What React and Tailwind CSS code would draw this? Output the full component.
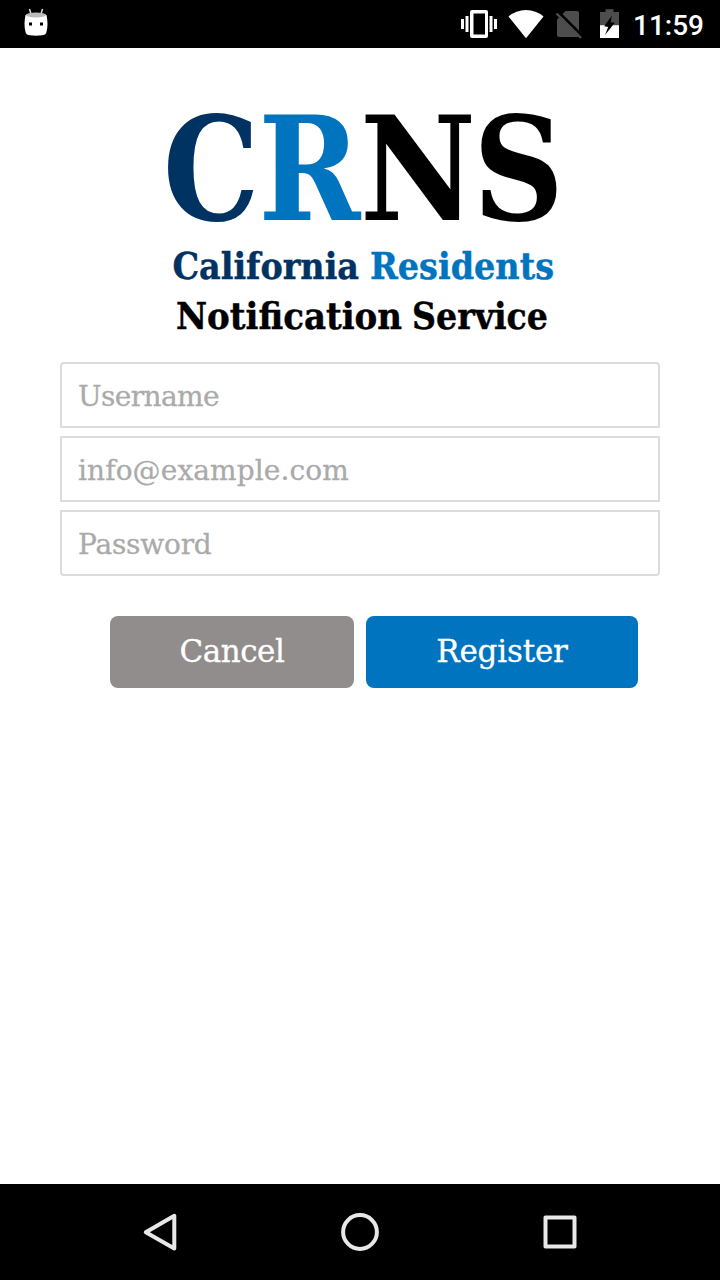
import React from "react";

const serif = "font-['DejaVu_Serif',serif] [-webkit-text-stroke-width:0.3px]";

function StatusBar() {
  return (
    <header className="flex h-12 shrink-0 items-center justify-between bg-black pl-6 pr-4">
      <svg className="h-12 w-6" viewBox="24 0 24 48">
        <path d="M29.500 9l1.500 5M42.500 9l-1.500 5" stroke="#ddd" strokeWidth="1.500" />
        <path d="M25.500 15Q36 11 46.500 15Q48.500 24 46.500 32Q46 35 42 35.300Q36 36 30 35.300Q26 35 25.500 32Q23.500 24 25.500 15Z" fill="#fff" />
        <ellipse cx="36" cy="15" rx="10" ry="2.500" fill="#bbb" />
        <path d="M29 22.500h3v3h-3zM40 22.500h3v3h-3z" fill="#000" />
      </svg>
      <div className="flex items-center">
        <svg className="h-12 w-[170px]" viewBox="460 0 170 48">
          <g fill="#fff">
            <path fillRule="evenodd" d="M472 10h14q2 0 2 2v24q0 2-2 2h-14q-2 0-2-2V12q0-2 2-2zM473.500 13.500v21h11.500v-21z" />
            <path d="M461 19h3v10h-3zM465.500 16h3v16h-3zM489.500 16h3v16h-3zM494 19h3v10h-3z" />
            <path d="M508.500 16.500Q516 10 526 10Q536 10 543.500 16.500L526 38.300Z" />
          </g>
          <path d="M565.500 11H577q2 0 2 2v22q0 2-2 2h-18q-2 0-2-2V19.500Z" fill="#4d4d4d" />
          <path d="M558.200 11.800L583.200 36.800" stroke="#000" strokeWidth="2.700" />
          <path d="M556.500 13.500L581 38" stroke="#4d4d4d" strokeWidth="2.400" />
          <path d="M600 12h5.500V9.300h8V12h5.500v13.500h-19z" fill="#4d4d4d" />
          <path d="M600 25.200h19V38h-19z" fill="#fff" />
          <path d="M611.800 15.800L604.200 26.300L608.200 27L605 35L614.800 22.800L610.600 22.200Z" fill="#000" />
        </svg>
        <svg className="h-12 w-[74px] overflow-visible" viewBox="630 0 74 48">
          <text x="633" y="35" textLength="71" lengthAdjust="spacingAndGlyphs" fill="#fff" className="font-[Roboto,sans-serif] text-[28px] font-medium">11:59</text>
        </svg>
      </div>
    </header>
  );
}

function Logo() {
  return (
    <svg
      role="img"
      className="h-[260px] w-[420px] overflow-visible font-['DejaVu_Serif_Condensed','DejaVu_Serif',serif] font-bold [font-stretch:condensed]"
      viewBox="150 80 420 260"
    >
      <g className="text-[145px]">
        <text x="163" y="220" textLength="96.500" lengthAdjust="spacingAndGlyphs" fill="#003262">C</text>
        <text x="258.500" y="220" textLength="102" lengthAdjust="spacingAndGlyphs" fill="#0074bf">R</text>
        <text x="360" y="220" textLength="116" lengthAdjust="spacingAndGlyphs" fill="#000">N</text>
        <text x="473" y="220" textLength="91" lengthAdjust="spacingAndGlyphs" fill="#000">S</text>
      </g>
      <g className="text-[37px]" strokeWidth=".4">
        <text x="172.500" y="279.300" textLength="186.500" lengthAdjust="spacingAndGlyphs" fill="#003262" stroke="#003262">California</text>
        <text x="370" y="279.300" textLength="184" lengthAdjust="spacingAndGlyphs" fill="#0074bf" stroke="#0074bf">Residents</text>
        <text x="176" y="329.300" textLength="226" lengthAdjust="spacingAndGlyphs" fill="#000" stroke="#000">Notification</text>
        <text x="412" y="329.300" textLength="136" lengthAdjust="spacingAndGlyphs" fill="#000" stroke="#000">Service</text>
      </g>
    </svg>
  );
}

function Field({ className, ...props }) {
  return (
    <input
      {...props}
      className={`block h-[66px] w-full border-2 border-[#dcdcdc] bg-white px-4 pt-0.5 text-[28px] text-[#333] outline-none placeholder:text-[#aaaaaa] ${serif} ${className}`}
    />
  );
}

export default function App() {
  return (
    <div className="flex h-[1280px] w-[720px] flex-col overflow-hidden bg-white">
      <StatusBar />
      <main className="flex grow flex-col pt-8">
        <div className="flex justify-center">
          <Logo />
        </div>
        <form className="mt-[22px] flex flex-col gap-2 px-[60px]">
          <Field type="text" placeholder="Username" className="rounded-t-[4px] tracking-[-0.6px]" />
          <Field type="email" placeholder="info@example.com" className="tracking-[0.1px]" />
          <Field type="password" placeholder="Password" className="rounded-b-[4px] tracking-[-0.2px]" />
          <div className={`mt-8 flex gap-3 pl-[50px] text-[31px] leading-9 text-white ${serif}`}>
            <button type="button" className="h-[72px] w-[244px] rounded-lg bg-[#918d8c] pb-0.5 tracking-[-0.5px]">Cancel</button>
            <button type="button" className="h-[72px] w-[272px] rounded-lg bg-[#0074bf] pb-0.5 tracking-[-0.2px]">Register</button>
          </div>
        </form>
      </main>
      <nav className="flex h-24 shrink-0 items-center justify-center gap-[152px] bg-black">
        <svg className="size-12" viewBox="0 0 48 48" fill="none" stroke="#e8e8e8" strokeWidth="4" strokeLinejoin="round">
          <path d="M9.800 24.300L38.300 7.800V40.500Z" />
        </svg>
        <svg className="size-12" viewBox="0 0 48 48" fill="none" stroke="#e8e8e8" strokeWidth="4">
          <circle cx="24" cy="24" r="16.900" />
        </svg>
        <svg className="size-12" viewBox="0 0 48 48" fill="none" stroke="#e8e8e8" strokeWidth="4" strokeLinejoin="round">
          <path d="M9.500 9.500h29v29h-29z" />
        </svg>
      </nav>
    </div>
  );
}
